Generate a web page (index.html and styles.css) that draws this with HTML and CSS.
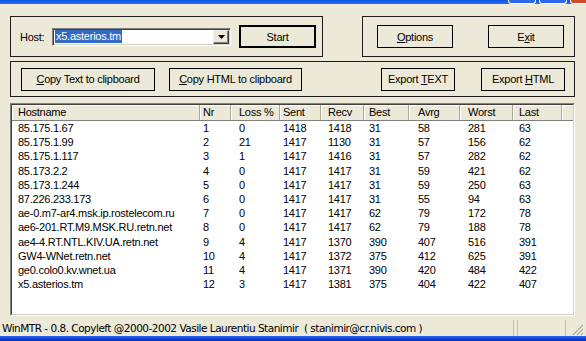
FILE: index.html
```html
<!DOCTYPE html>
<html lang="en">
<head>
<meta charset="UTF-8">
<meta name="viewport" content="width=device-width, initial-scale=1.0">
<title>WinMTR</title>
<link rel="stylesheet" href="styles.css">
</head>
<body>
<div class="titlebar">
    <span class="cap"></span>
    <span class="cap"></span>
    <span class="cap cap-close"></span>
</div>

<div class="window">
    <div class="top-row">
        <div class="group group-host">
            <span class="label">Host:</span>
            <div class="combo">
                <span class="combo-text"><span class="selected">x5.asterios.tm</span></span>
                <span class="combo-btn">
                    <svg width="7" height="4" viewBox="0 0 7 4"><path d="M0 0h7L3.5 4z" fill="#000"/></svg>
                </span>
            </div>
            <button class="button button-default">Start</button>
        </div>
        <div class="group group-options">
            <button class="button btn-options"><u>O</u>ptions</button>
            <button class="button btn-exit">E<u>x</u>it</button>
        </div>
    </div>

    <div class="group group-export">
        <button class="button btn-copy-text"><u>C</u>opy Text to clipboard</button>
        <button class="button btn-copy-html"><u>C</u>opy HTML to clipboard</button>
        <button class="button btn-export-text">Export <u>T</u>EXT</button>
        <button class="button btn-export-html">Export <u>H</u>TML</button>
    </div>

    <div class="list">
        <div class="list-body">
            <div class="cols header">
                <span>Hostname</span><span>Nr</span><span>Loss %</span><span>Sent</span><span>Recv</span><span>Best</span><span>Avrg</span><span>Worst</span><span>Last</span><span></span>
            </div>
            <div class="cols row"><span>85.175.1.67</span><span>1</span><span>0</span><span>1418</span><span>1418</span><span>31</span><span>58</span><span>281</span><span>63</span></div>
            <div class="cols row"><span>85.175.1.99</span><span>2</span><span>21</span><span>1417</span><span>1130</span><span>31</span><span>57</span><span>156</span><span>62</span></div>
            <div class="cols row"><span>85.175.1.117</span><span>3</span><span>1</span><span>1417</span><span>1416</span><span>31</span><span>57</span><span>282</span><span>62</span></div>
            <div class="cols row"><span>85.173.2.2</span><span>4</span><span>0</span><span>1417</span><span>1417</span><span>31</span><span>59</span><span>421</span><span>62</span></div>
            <div class="cols row"><span>85.173.1.244</span><span>5</span><span>0</span><span>1417</span><span>1417</span><span>31</span><span>59</span><span>250</span><span>63</span></div>
            <div class="cols row"><span>87.226.233.173</span><span>6</span><span>0</span><span>1417</span><span>1417</span><span>31</span><span>55</span><span>94</span><span>63</span></div>
            <div class="cols row"><span>ae-0.m7-ar4.msk.ip.rostelecom.ru</span><span>7</span><span>0</span><span>1417</span><span>1417</span><span>62</span><span>79</span><span>172</span><span>78</span></div>
            <div class="cols row"><span>ae6-201.RT.M9.MSK.RU.retn.net</span><span>8</span><span>0</span><span>1417</span><span>1417</span><span>62</span><span>79</span><span>188</span><span>78</span></div>
            <div class="cols row"><span>ae4-4.RT.NTL.KIV.UA.retn.net</span><span>9</span><span>4</span><span>1417</span><span>1370</span><span>390</span><span>407</span><span>516</span><span>391</span></div>
            <div class="cols row"><span>GW4-WNet.retn.net</span><span>10</span><span>4</span><span>1417</span><span>1372</span><span>375</span><span>412</span><span>625</span><span>391</span></div>
            <div class="cols row"><span>ge0.colo0.kv.wnet.ua</span><span>11</span><span>4</span><span>1417</span><span>1371</span><span>390</span><span>420</span><span>484</span><span>422</span></div>
            <div class="cols row"><span>x5.asterios.tm</span><span>12</span><span>3</span><span>1417</span><span>1381</span><span>375</span><span>404</span><span>422</span><span>407</span></div>
        </div>
    </div>
</div>

<div class="statusbar">
    <div class="pane pane-main">WinMTR - 0.8. Copyleft @2000-2002 Vasile Laurentiu Stanimir&nbsp; ( stanimir@cr.nivis.com )</div>
    <div class="pane pane-small"></div>
    <svg class="grip" width="13" height="13" viewBox="0 0 13 13">
        <path d="M12 2L2 12M12 6L6 12M12 10L10 12" stroke="#aca899" stroke-width="1.2"/>
        <path d="M13 3L3 13M13 7L7 13M13 11L11 13" stroke="#fff" stroke-width="1"/>
    </svg>
</div>
<div class="frame-bottom"></div>
</body>
</html>
```

FILE: styles.css
```css
body {
    margin: 0;
    width: 586px;
    height: 341px;
    overflow: hidden;
    background-color: #ece9d8;
    font-family: "Liberation Sans", Arial, sans-serif;
    font-size: 11px;
    letter-spacing: -0.25px;
    color: #000;
}

/* bottom edge of the XP title bar */
.titlebar {
    height: 4px;
    display: flex;
    justify-content: flex-end;
    align-items: flex-end;
    gap: 3px;
    overflow: hidden;
    background: linear-gradient(#0a55e2, #2a6cf0);
}
.cap {
    width: 26px;
    height: 3px;
    border: 1px solid #fff;
    border-top: none;
    border-radius: 0 0 3px 3px;
    background-color: #2d68ea;
}
.cap-close {
    margin-right: -12px;
    background-color: #d04a2c;
}

.window {
    padding: 12px 11px 0 10px;
}
.top-row {
    display: flex;
    justify-content: space-between;
}
.group {
    box-sizing: border-box;
    height: 41px;
    border: 1px solid #1c1c1c;
    display: flex;
    align-items: center;
}
.group-host {
    width: 313px;
    padding-left: 9px;
}
.group-options {
    width: 213px;
    padding-left: 14px;
}
.group-export {
    margin-top: 4px;
    height: 36px;
    padding: 0 9px 0 10px;
}

.label {
    width: 32px;
}
.combo {
    box-sizing: border-box;
    width: 179px;
    height: 18px;
    display: flex;
    align-items: center;
    background-color: #fff;
    border: 1px solid;
    border-color: #808080 #fff #fff #808080;
    box-shadow: inset 1px 1px #404040, inset -1px -1px #d4d0c8;
    padding: 1px;
}
.combo-text {
    padding-left: 1px;
}
.selected {
    display: inline-block;
    background-color: #316ac5;
    color: #fff;
    line-height: 13px;
    padding: 0 1px;
}
.combo-btn {
    margin-left: auto;
    box-sizing: border-box;
    width: 16px;
    height: 14px;
    display: flex;
    align-items: center;
    justify-content: center;
    background-color: #ece9d8;
    border: 1px solid;
    border-color: #f1efe2 #404040 #404040 #f1efe2;
    box-shadow: inset -1px -1px #808080;
}

.button {
    box-sizing: border-box;
    height: 23px;
    padding: 0;
    font: inherit;
    letter-spacing: inherit;
    color: #000;
    background-color: #ece9d8;
    border: 1px solid #000;
}
.button-default {
    width: 77px;
    margin-left: 8px;
    border-width: 2px;
}
.btn-options { width: 76px; }
.btn-exit { width: 76px; margin-left: 35px; }
.btn-copy-text { width: 134px; }
.btn-copy-html { width: 133px; margin-left: 14px; }
.btn-export-text { width: 74px; margin-left: auto; }
.btn-export-html { width: 84px; margin-left: 26px; }

.list {
    box-sizing: border-box;
    margin-top: 6px;
    height: 213px;
    border: 1px solid;
    border-color: #808080 #fff #fff #808080;
}
.list-body {
    box-sizing: border-box;
    height: 100%;
    background-color: #fff;
    border: 1px solid;
    border-color: #404040 #d4d0c8 #d4d0c8 #404040;
    overflow: hidden;
}
.cols {
    display: grid;
    grid-template-columns: 188px 31px 49px 41px 43px 45px 51px 53px 49px 1fr;
    white-space: nowrap;
}
.cols span:nth-child(1) { padding-left: 6px; }
.cols span:nth-child(2) { padding-left: 3px; }
.cols span:nth-child(3) { padding-left: 8px; }
.cols span:nth-child(4) { padding-left: 3px; }
.cols span:nth-child(5) { padding-left: 7px; }
.cols span:nth-child(6) { padding-left: 5px; }
.cols span:nth-child(7) { padding-left: 9px; }
.cols span:nth-child(8) { padding-left: 8px; }
.cols span:nth-child(9) { padding-left: 6px; }

.header {
    box-sizing: border-box;
    height: 16px;
    line-height: 15px;
    background-color: #ece9d8;
    border-bottom: 1px solid #808080;
}
.header span {
    border-right: 1px solid #aca899;
    box-shadow: inset 1px 1px #fff;
}
.header span:last-child {
    border-right: none;
}
.row {
    height: 14.2px;
    line-height: 14.2px;
}

.statusbar {
    box-sizing: border-box;
    height: 20px;
    padding-top: 4px;
    display: flex;
}
.pane {
    box-sizing: border-box;
    height: 16px;
    line-height: 16px;
}
.pane-main {
    width: 514px;
    padding-left: 2px;
    border-right: 1px solid #c2bfae;
    font-family: "DejaVu Sans", Verdana, sans-serif;
    font-size: 10.5px;
    letter-spacing: -0.5px;
}
.pane-small {
    width: 49px;
    margin-left: 3px;
    border-left: 1px solid #c2bfae;
    border-right: 1px solid #c2bfae;
}
.grip {
    margin-left: auto;
    margin-right: 2px;
    align-self: flex-end;
}

.frame-bottom {
    height: 5px;
    background: linear-gradient(#2d64e8, #0b3cd8 60%, #0a2fb0);
}
```
